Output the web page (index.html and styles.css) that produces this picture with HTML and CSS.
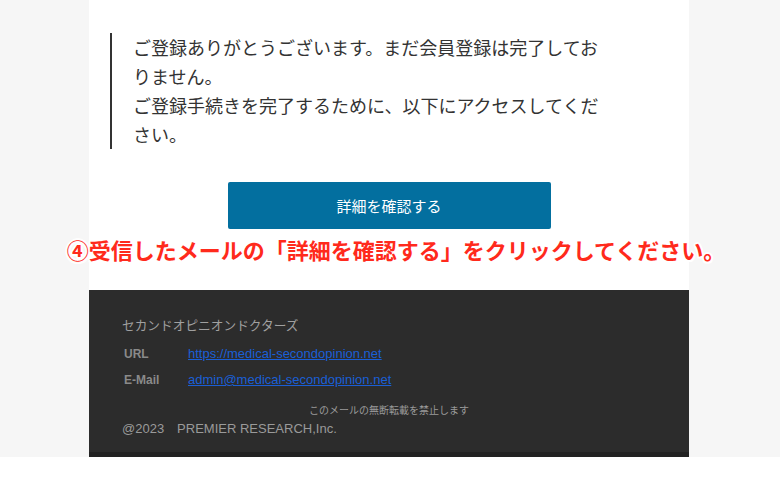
FILE: index.html
```html
<!DOCTYPE html>
<html lang="ja">
<head>
<meta charset="utf-8">
<title>会員登録</title>
<link rel="stylesheet" href="styles.css">
</head>
<body>
<div class="page">
  <div class="card">
    <div class="body">
      <blockquote class="quote">
        <p>ご登録ありがとうございます。まだ会員登録は完了しておりません。</p>
        <p>ご登録手続きを完了するために、以下にアクセスしてください。</p>
      </blockquote>
      <div class="btn-row"><a class="btn">詳細を確認する</a></div>
      <p class="note">④受信したメールの「詳細を確認する」をクリックしてください。</p>
    </div>
    <footer class="footer">
      <div class="inner">
        <p class="brand">セカンドオピニオンドクターズ</p>
        <div class="info">
          <span class="label">URL</span><a class="link">https://medical-secondopinion.net</a>
          <span class="label">E-Mail</span><a class="link">admin@medical-secondopinion.net</a>
        </div>
        <p class="notice">このメールの無断転載を禁止します</p>
        <p class="copy">@2023　PREMIER RESEARCH,Inc.</p>
      </div>
      <div class="strip"></div>
    </footer>
  </div>
</div>
</body>
</html>
```
FILE: styles.css
```css
html, body {
  margin: 0;
  padding: 0;
  background: #ffffff;
  font-family: "Noto Sans CJK JP", "Noto Sans", sans-serif;
}
p { margin: 0; }
.page {
  background: #f6f6f6;
  padding-left: 89px;
}
.card {
  width: 600px;
  background: #ffffff;
}
.body {
  padding-top: 33px;
  padding-bottom: 26px;
}
.quote {
  margin: 0 0 0 21px;
  width: 476px;
  border-left: 2px solid #333333;
  padding-left: 21px;
  font-size: 18px;
  line-height: 29px;
  color: #333333;
}
.btn-row {
  margin-top: 33px;
  display: flex;
  justify-content: center;
}
.btn {
  display: flex;
  align-items: center;
  justify-content: center;
  width: 323px;
  height: 47px;
  background: #036f9f;
  border-radius: 2px;
  color: #ffffff;
  font-size: 15px;
  text-decoration: none;
}
.note {
  margin: 5px -40px 0;
  padding-left: 14px;
  text-align: center;
  white-space: nowrap;
  font-size: 22px;
  line-height: 30px;
  font-weight: 700;
  color: #ff2a1c;
  text-shadow: 2px 0 0 #fff, -2px 0 0 #fff, 0 2px 0 #fff, 0 -2px 0 #fff,
    1.5px 1.5px 0 #fff, -1.5px 1.5px 0 #fff, 1.5px -1.5px 0 #fff, -1.5px -1.5px 0 #fff;
}
.footer {
  background: #2c2c2c;
}
.inner {
  padding: 26px 33px 15px;
}
.brand {
  font-size: 12.7px;
  line-height: 18px;
  color: #a0a0a0;
}
.info {
  margin-top: 7px;
  display: grid;
  grid-template-columns: 64px auto;
  justify-content: start;
  padding-left: 2px;
  font-family: "Liberation Sans", Arial, sans-serif;
  font-size: 13px;
  line-height: 26px;
}
.label {
  font-weight: 700;
  font-size: 12px;
  color: #8a8a8a;
}
.link {
  color: #1a5fd6;
  text-decoration: underline;
}
.notice {
  margin-top: 10px;
  text-align: center;
  font-size: 10px;
  line-height: 14px;
  color: #9a9a9a;
}
.copy {
  margin-top: 4px;
  font-family: "Liberation Sans", Arial, "Noto Sans CJK JP", sans-serif;
  font-size: 13px;
  line-height: 16px;
  color: #9a9a9a;
}
.strip {
  height: 5px;
  background: #222222;
}
```
